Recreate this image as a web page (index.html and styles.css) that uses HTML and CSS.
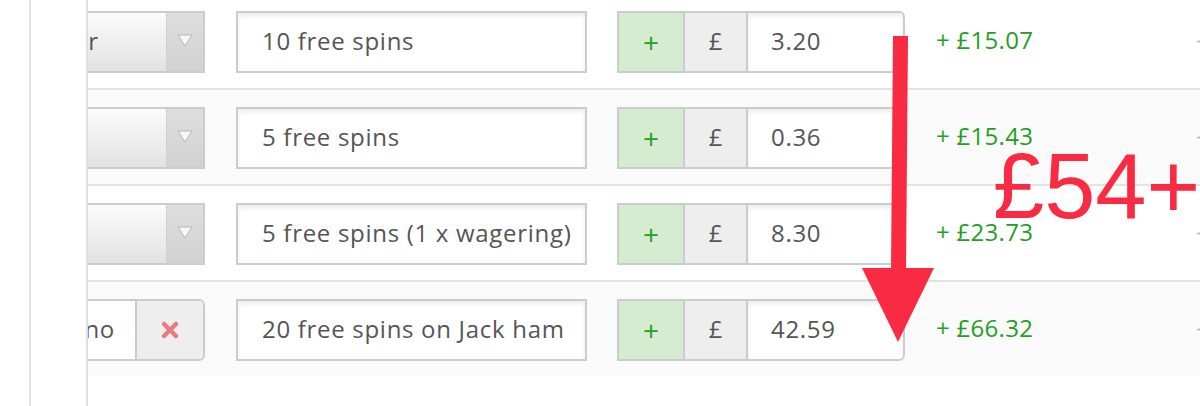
FILE: index.html
```html
<!DOCTYPE html>
<html>
<head>
<meta charset="utf-8">
<link rel="stylesheet" href="styles.css">
</head>
<body>
<div class="frame">
  <div class="rail"></div>
  <div class="spacer"></div>
  <div class="table">
    <div class="row">
      <div class="c-type"><div class="select"><div class="sel-main">Other</div><div class="sel-btn"><svg width="16" height="13" viewBox="0 0 16 13"><path d="M1 1 L15 1 L8 12 Z" fill="#f6f6f6" stroke="#b5b5b5" stroke-width="1"/></svg></div></div></div>
      <div class="c-desc"><div class="txt">10 free spins</div></div>
      <div class="c-amt"><div class="grp"><div class="plus">+</div><div class="cur">£</div><div class="amt">3.20</div></div></div>
      <div class="c-profit">+ £15.07</div>
      <div class="c-more">+</div>
    </div>
    <div class="row alt">
      <div class="c-type"><div class="select"><div class="sel-main"></div><div class="sel-btn"><svg width="16" height="13" viewBox="0 0 16 13"><path d="M1 1 L15 1 L8 12 Z" fill="#f6f6f6" stroke="#b5b5b5" stroke-width="1"/></svg></div></div></div>
      <div class="c-desc"><div class="txt">5 free spins</div></div>
      <div class="c-amt"><div class="grp"><div class="plus">+</div><div class="cur">£</div><div class="amt">0.36</div></div></div>
      <div class="c-profit">+ £15.43</div>
      <div class="c-more">+</div>
    </div>
    <div class="row">
      <div class="c-type"><div class="select"><div class="sel-main"></div><div class="sel-btn"><svg width="16" height="13" viewBox="0 0 16 13"><path d="M1 1 L15 1 L8 12 Z" fill="#f6f6f6" stroke="#b5b5b5" stroke-width="1"/></svg></div></div></div>
      <div class="c-desc"><div class="txt">5 free spins (1 x wagering)</div></div>
      <div class="c-amt"><div class="grp"><div class="plus">+</div><div class="cur">£</div><div class="amt">8.30</div></div></div>
      <div class="c-profit">+ £23.73</div>
      <div class="c-more">+</div>
    </div>
    <div class="row alt last">
      <div class="c-type"><div class="custom"><div class="cus-main">Casino</div><div class="del"><svg width="20" height="20" viewBox="0 0 20 20"><path d="M4 4 L16 16 M16 4 L4 16" stroke="#e97a80" stroke-width="4.5" stroke-linecap="round"/></svg></div></div></div>
      <div class="c-desc"><div class="txt">20 free spins on Jack ham</div></div>
      <div class="c-amt"><div class="grp"><div class="plus">+</div><div class="cur">£</div><div class="amt">42.59</div></div></div>
      <div class="c-profit">+ £66.32</div>
      <div class="c-more">+</div>
    </div>
  </div>
</div>
<svg class="arrow" width="1200" height="406" viewBox="0 0 1200 406">
  <polygon points="893,36 908,36 906,272 891,272" fill="#f92b42"/>
  <polygon points="862,268 934,268 898,342" fill="#f92b42"/>
</svg>
<div class="total">£54+</div>
</body>
</html>
```
FILE: styles.css
```css
html, body {
  margin: 0;
  padding: 0;
}
body {
  width: 1200px;
  height: 406px;
  overflow: hidden;
  background: #ffffff;
  position: relative;
  font-family: "Open Sans", "Liberation Sans", sans-serif;
  color: #555555;
}
.frame {
  display: flex;
  height: 100%;
}
.rail {
  width: 29px;
  flex: none;
  border-right: 2px solid #e2e2e2;
}
.spacer {
  width: 55px;
  flex: none;
  border-right: 2px solid #dedede;
}
.table {
  flex: 1;
  margin-top: -6px;
  overflow: hidden;
  min-width: 0;
}
.row {
  display: flex;
  align-items: flex-start;
  height: 94px;
  border-bottom: 2px solid #e3e3e3;
  background: #ffffff;
}
.row.alt {
  background: #fafafa;
}
.row.last {
  border-bottom: none;
}
.c-type {
  width: 117px;
  flex: none;
  overflow: hidden;
  margin-top: 17px;
}
.select {
  display: flex;
  height: 62px;
  box-sizing: border-box;
  border: 2px solid #cccccc;
  margin-left: -60px;
  width: 177px;
}
.sel-main {
  flex: 1;
  background: linear-gradient(#fbfbfb, #e2e2e2);
  text-align: right;
  padding-right: 72px;
  font-size: 24px;
  letter-spacing: 0.7px;
  line-height: 56px;
  overflow: hidden;
  white-space: nowrap;
}
.sel-btn {
  width: 37px;
  flex: none;
  border-left: 1px solid #cfcfcf;
  background: linear-gradient(#dedede, #d2d2d2);
  display: flex;
  justify-content: center;
  padding-top: 21px;
  box-sizing: border-box;
}
.custom {
  display: flex;
  height: 62px;
  box-sizing: border-box;
  border: 2px solid #cccccc;
  border-radius: 0 6px 6px 0;
  margin-left: -60px;
  width: 177px;
  background: #ffffff;
}
.cus-main {
  flex: 1;
  text-align: right;
  padding-right: 20px;
  font-size: 24px;
  letter-spacing: 0.7px;
  line-height: 56px;
  white-space: nowrap;
  overflow: hidden;
}
.del {
  width: 66px;
  flex: none;
  background: #eeeeee;
  border-left: 2px solid #cccccc;
  border-radius: 0 5px 5px 0;
  display: flex;
  align-items: center;
  justify-content: center;
}
.c-desc {
  width: 351px;
  flex: none;
  margin-left: 31px;
  margin-top: 17px;
}
.txt {
  height: 62px;
  box-sizing: border-box;
  border: 2px solid #cccccc;
  background: #ffffff;
  box-shadow: inset 0 3px 4px rgba(0, 0, 0, 0.08);
  padding-left: 24px;
  font-size: 24px;
  letter-spacing: 0.7px;
  line-height: 56px;
  white-space: nowrap;
  overflow: hidden;
}
.c-amt {
  width: 288px;
  flex: none;
  margin-left: 30px;
  margin-top: 17px;
}
.grp {
  display: flex;
  height: 62px;
  box-sizing: border-box;
  border: 2px solid #cccccc;
  border-radius: 0 6px 6px 0;
  overflow: hidden;
}
.plus {
  width: 64px;
  flex: none;
  background: #d6ecd1;
  color: #22a022;
  border-right: 2px solid #cccccc;
  text-align: center;
  font-size: 28px;
  line-height: 58px;
}
.cur {
  width: 61px;
  flex: none;
  background: #eeeeee;
  border-right: 2px solid #cccccc;
  text-align: center;
  font-size: 24px;
  line-height: 56px;
}
.amt {
  flex: 1;
  background: #ffffff;
  box-shadow: inset 0 3px 4px rgba(0, 0, 0, 0.08);
  padding-left: 23px;
  font-size: 24px;
  letter-spacing: 0.7px;
  line-height: 56px;
}
.c-profit {
  width: 260px;
  flex: none;
  margin-left: 31px;
  margin-top: 17px;
  line-height: 58px;
  font-size: 24px;
  letter-spacing: 0.3px;
  color: #1fa01f;
  white-space: nowrap;
}
.c-more {
  width: 40px;
  flex: none;
  margin-top: 17px;
  line-height: 58px;
  font-size: 22px;
  color: #aab4b0;
}
.arrow {
  position: absolute;
  left: 0;
  top: 0;
  pointer-events: none;
}
.total {
  position: absolute;
  left: 993px;
  top: 140px;
  font-family: "Liberation Sans", Arial, sans-serif;
  font-size: 92px;
  line-height: 92px;
  color: #f92b42;
  white-space: nowrap;
}
```
